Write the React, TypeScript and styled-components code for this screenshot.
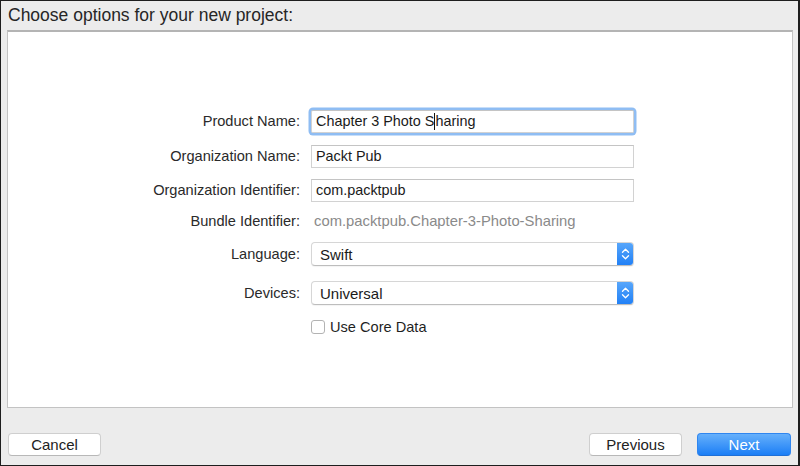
import React from 'react';
import styled, { createGlobalStyle } from 'styled-components';

const GlobalStyle = createGlobalStyle`
  html, body {
    margin: 0;
    padding: 0;
    background: #ececec;
  }
  body {
    font-family: "Helvetica Neue", "Liberation Sans", Arial, sans-serif;
    color: #222;
  }
`;

const Window = styled.div`
  width: 800px;
  height: 466px;
  box-sizing: border-box;
  border: 1px solid #1e1e1e;
  border-right-width: 2px;
  background: #ececec;
  display: flex;
  flex-direction: column;
`;

const Title = styled.div`
  height: 29px;
  padding-left: 7px;
  display: flex;
  align-items: center;
  font-size: 17.5px;
  color: #262626;
`;

const Panel = styled.div`
  height: 378px;
  margin: 0 5px 0 6px;
  background: #fff;
  border: 1px solid #c3c3c3;
  border-top: 2px solid #b4b4b4;
  box-sizing: border-box;
  padding-top: 72px;
`;

const Form = styled.div`
  display: grid;
  grid-template-columns: 292px 323px;
  column-gap: 11px;
`;

const Row = styled.div<{ $h: number }>`
  display: contents;
  & > * {
    height: ${p => p.$h}px;
  }
`;

const Label = styled.div`
  display: flex;
  align-items: center;
  justify-content: flex-end;
  font-size: 14.6px;
  color: #2a2a2a;
`;

const Cell = styled.div`
  display: flex;
  align-items: center;
`;

const Field = styled.div<{ $focused?: boolean }>`
  width: 100%;
  height: 23px;
  box-sizing: border-box;
  border: 1px solid #d2d2d2;
  border-top-color: #c4c4c4;
  background: #fff;
  display: flex;
  align-items: center;
  padding-left: 4px;
  font-size: 14.4px;
  color: #1a1a1a;
  white-space: pre;
  box-shadow: ${p => (p.$focused ? '0 0 0 2.5px #8fbdf3' : 'none')};
  border-radius: ${p => (p.$focused ? '2px' : '0')};
`;

const Caret = styled.span`
  display: inline-block;
  width: 1px;
  height: 17px;
  background: #111;
  vertical-align: middle;
`;

const Static = styled.div`
  font-size: 14.8px;
  color: #8a8a8a;
  padding-left: 3px;
`;

const Select = styled.div`
  width: 100%;
  height: 24px;
  box-sizing: border-box;
  border: 1px solid #d6d6d6;
  border-bottom-color: #bdbdbd;
  border-radius: 4px;
  background: #fff;
  display: flex;
  align-items: stretch;
  overflow: hidden;
  box-shadow: 0 1px 1px rgba(0, 0, 0, 0.05);
`;

const SelectValue = styled.div`
  flex: 1;
  display: flex;
  align-items: center;
  padding-left: 8px;
  font-size: 15px;
  color: #1a1a1a;
`;

const Stepper = styled.div`
  width: 17px;
  background: linear-gradient(#5aa8fb, #1f7ff6);
  display: flex;
  align-items: center;
  justify-content: center;
  margin: -1px -1px -1px 0;
`;

const CheckRow = styled.label`
  display: flex;
  align-items: center;
  gap: 5px;
  font-size: 14.6px;
  color: #1f1f1f;
`;

const CheckBox = styled.span`
  width: 14px;
  height: 14px;
  box-sizing: border-box;
  border: 1px solid #b3b3b3;
  border-radius: 3px;
  background: #fff;
`;

const Footer = styled.div`
  flex: 1;
  display: flex;
  align-items: flex-start;
  justify-content: space-between;
  padding: 25px 7px 0 7px;
`;

const ButtonGroup = styled.div`
  display: flex;
  gap: 15px;
`;

const Button = styled.button<{ $primary?: boolean }>`
  width: ${p => (p.$primary ? 94 : 93)}px;
  height: 23px;
  border-radius: 4px;
  font-family: inherit;
  font-size: 15px;
  padding: 0;
  cursor: default;
  border: 1px solid ${p => (p.$primary ? '#2f86f0' : '#cfcfcf')};
  border-bottom-color: ${p => (p.$primary ? '#1f6fd6' : '#b8b8b8')};
  color: ${p => (p.$primary ? '#fff' : '#222')};
  background: ${p =>
    p.$primary ? 'linear-gradient(#66b0fb, #1b7ef6)' : '#fff'};
`;

const Chevrons = () => (
  <svg width="9" height="14" viewBox="0 0 9 14">
    <path
      d="M1.5 5.2 L4.5 2.2 L7.5 5.2 M1.5 8.8 L4.5 11.8 L7.5 8.8"
      fill="none"
      stroke="#fff"
      strokeWidth="1.3"
      strokeLinecap="round"
      strokeLinejoin="round"
    />
  </svg>
);

export default function App() {
  return (
    <>
      <GlobalStyle />
      <Window>
        <Title>Choose options for your new project:</Title>
        <Panel>
          <Form>
            <Row $h={34}>
              <Label>Product Name:</Label>
              <Cell>
                <Field $focused>
                  Chapter 3 Photo S<Caret />haring
                </Field>
              </Cell>
            </Row>
            <Row $h={36}>
              <Label>Organization Name:</Label>
              <Cell>
                <Field>Packt Pub</Field>
              </Cell>
            </Row>
            <Row $h={32}>
              <Label>Organization Identifier:</Label>
              <Cell>
                <Field>com.packtpub</Field>
              </Cell>
            </Row>
            <Row $h={30}>
              <Label>Bundle Identifier:</Label>
              <Cell>
                <Static>com.packtpub.Chapter-3-Photo-Sharing</Static>
              </Cell>
            </Row>
            <Row $h={36}>
              <Label>Language:</Label>
              <Cell>
                <Select>
                  <SelectValue>Swift</SelectValue>
                  <Stepper>
                    <Chevrons />
                  </Stepper>
                </Select>
              </Cell>
            </Row>
            <Row $h={42}>
              <Label>Devices:</Label>
              <Cell>
                <Select>
                  <SelectValue>Universal</SelectValue>
                  <Stepper>
                    <Chevrons />
                  </Stepper>
                </Select>
              </Cell>
            </Row>
            <Row $h={26}>
              <span />
              <Cell>
                <CheckRow>
                  <CheckBox />
                  Use Core Data
                </CheckRow>
              </Cell>
            </Row>
          </Form>
        </Panel>
        <Footer>
          <Button>Cancel</Button>
          <ButtonGroup>
            <Button>Previous</Button>
            <Button $primary>Next</Button>
          </ButtonGroup>
        </Footer>
      </Window>
    </>
  );
}
